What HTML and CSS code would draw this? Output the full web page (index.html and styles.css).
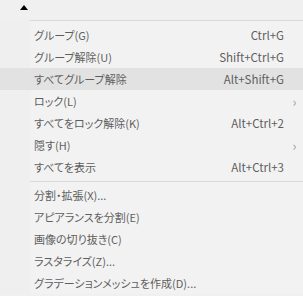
FILE: index.html
```html
<!DOCTYPE html>
<html lang="ja">
<head>
    <meta charset="UTF-8">
    <title>グループメニュー</title>
    <link rel="stylesheet" href="styles.css">
</head>
<body>
<div class="topbar">
    <span class="caret"></span>
</div>

<div class="menu">
    <div class="item"><span class="label">グループ(G)</span><span class="key">Ctrl+G</span><span class="sub"></span></div>
    <div class="item"><span class="label">グループ解除(U)</span><span class="key">Shift+Ctrl+G</span><span class="sub"></span></div>
    <div class="item hover"><span class="label">すべてグループ解除</span><span class="key">Alt+Shift+G</span><span class="sub"></span></div>
    <div class="item"><span class="label">ロック(L)</span><span class="key"></span><span class="sub">&#x203A;</span></div>
    <div class="item"><span class="label">すべてをロック解除(K)</span><span class="key">Alt+Ctrl+2</span><span class="sub"></span></div>
    <div class="item"><span class="label">隠す(H)</span><span class="key"></span><span class="sub">&#x203A;</span></div>
    <div class="item"><span class="label">すべてを表示</span><span class="key">Alt+Ctrl+3</span><span class="sub"></span></div>

    <div class="sep"></div>

    <div class="item"><span class="label">分割・拡張(X)...</span><span class="key"></span><span class="sub"></span></div>
    <div class="item"><span class="label">アピアランスを分割(E)</span><span class="key"></span><span class="sub"></span></div>
    <div class="item"><span class="label">画像の切り抜き(C)</span><span class="key"></span><span class="sub"></span></div>
    <div class="item"><span class="label">ラスタライズ(Z)...</span><span class="key"></span><span class="sub"></span></div>
    <div class="item"><span class="label">グラデーションメッシュを作成(D)...</span><span class="key"></span><span class="sub"></span></div>
</div>
</body>
</html>
```

FILE: styles.css
```css
body {
    margin: 0;
    background: #f0f0f0;
    font-family: "Noto Sans CJK JP", "Noto Sans", sans-serif;
    font-size: 11px;
    color: #5e5e5e;
    font-feature-settings: "palt";
}

.topbar {
    height: 20px;
    padding-left: 20px;
}
.caret {
    display: inline-block;
    margin-top: 5px;
    width: 0;
    height: 0;
    border-left: 4.5px solid transparent;
    border-right: 4.5px solid transparent;
    border-bottom: 5px solid #000;
    vertical-align: top;
}

.menu {
    padding-top: 3px;
    background: linear-gradient(to right, #efefef 30px, #f2f2f2 30px);
    border-top: 1px solid #d9d9d9;
    position: relative;
}
/* top line only over the menu body, not the left strip */
.menu::before {
    content: "";
    position: absolute;
    left: 0;
    top: -1px;
    width: 30px;
    height: 1px;
    background: #efefef;
}

.item {
    display: flex;
    align-items: center;
    height: 22px;
    padding-left: 34px;
    white-space: nowrap;
}
.item.hover {
    background: #e2e2e2;
}
.label {
    flex: 1;
}
.key {
    text-align: right;
    font-size: 11.5px;
}
.sub {
    width: 17px;
    text-align: center;
    color: #a0a0a0;
    font-size: 13px;
    line-height: 1;
    padding-left: 2px;
}

.sep {
    height: 1px;
    margin: 3px 0 2px 30px;
    background: #d9d9d9;
}
```
